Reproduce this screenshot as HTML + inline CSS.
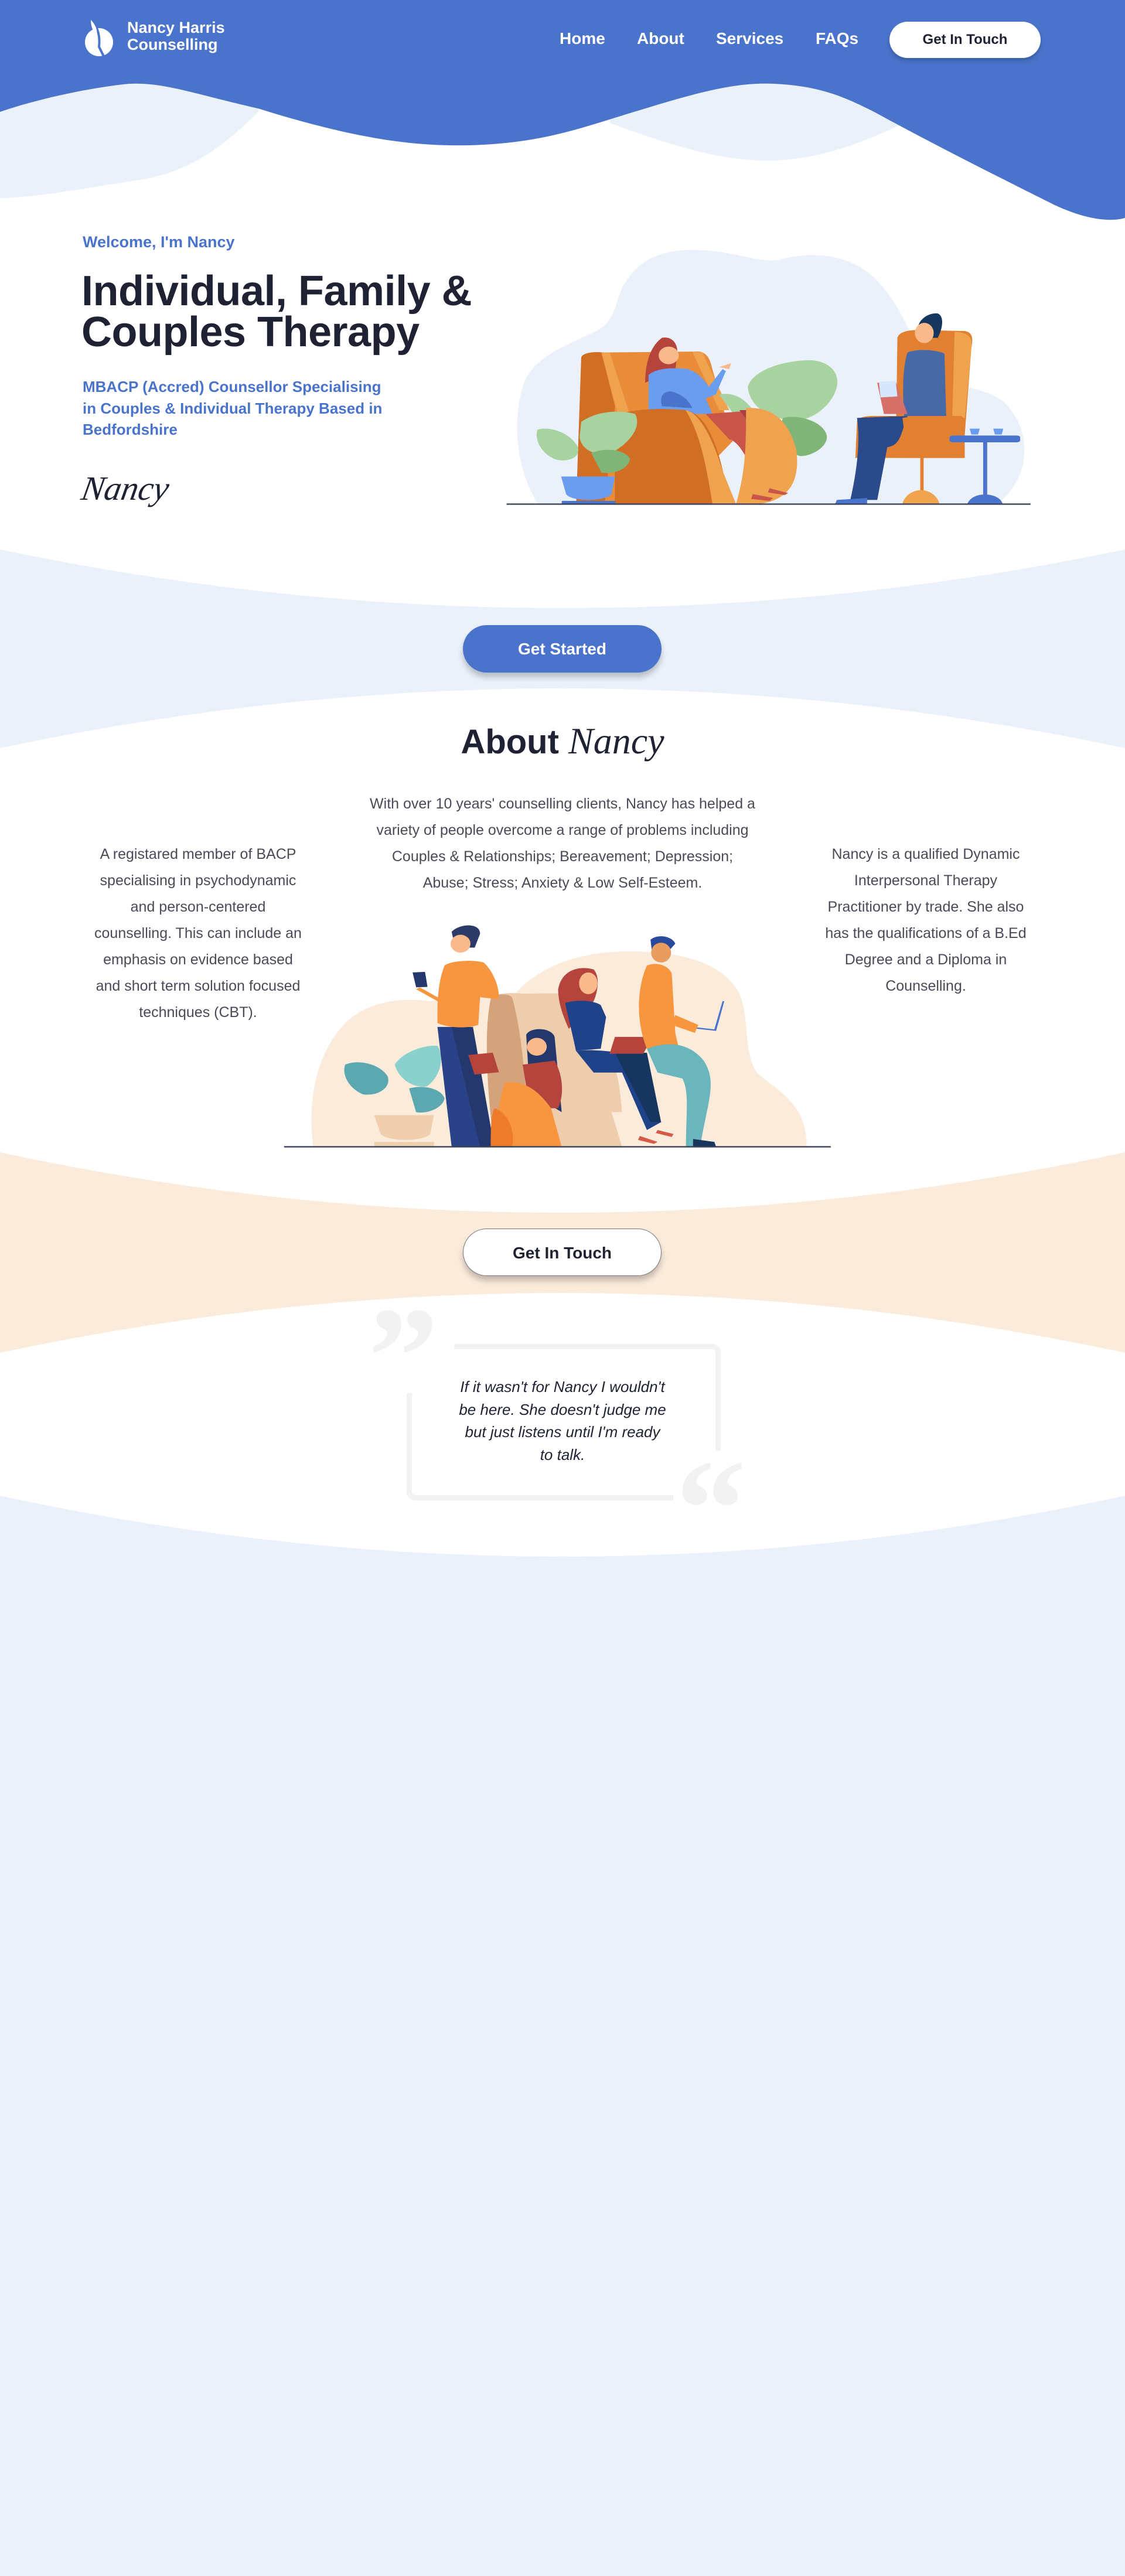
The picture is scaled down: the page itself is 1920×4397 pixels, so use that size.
<!DOCTYPE html>
<html><head><meta charset="utf-8"><style>
*{margin:0;padding:0;box-sizing:border-box}
body{width:1920px;height:4397px;position:relative;background:#fff;font-family:"Liberation Sans",sans-serif;overflow:hidden;color:#1f2233}
.a{position:absolute}
.nav{color:#fff;font-size:28px;font-weight:bold;top:50px}
.btn{position:absolute;left:790px;width:339px;height:81px;border-radius:41px;font-size:28px;font-weight:bold;text-align:center;line-height:81px;box-shadow:0 8px 10px rgba(0,0,0,.22)}
.p{font-size:25px;line-height:45px;color:#4a4a58;text-align:center}
.sig{font-family:"Liberation Serif",serif;font-style:italic;font-weight:normal}
</style></head><body>
<svg class="a" style="left:0;top:0" width="1920" height="4397" viewBox="0 0 1920 4397">
<path d="M0 338 C60 338 150 320 245 306 C330 290 380 250 441 191 L441 100 L0 100Z" fill="#eaf1fa"/>
<path d="M1041 210 C1150 250 1230 274 1310 274 C1400 274 1480 240 1543 210 L1543 100 L1041 100Z" fill="#eaf1fa"/>
<path d="M0 191 C60 170 150 150 220 143 C280 140 330 160 440 185 C600 235 700 250 800 248 C930 245 1000 215 1102 185 C1200 155 1260 140 1322 143 C1400 147 1440 165 1490 190 C1600 250 1700 300 1800 350 C1860 378 1900 378 1920 372 L1920 0 L0 0Z" fill="#4a74cc"/>
<path d="M0 938 Q960 1138 1920 938 L1920 1277 Q960 1073 0 1277Z" fill="#eaf1fa"/>
<path d="M0 1967 Q960 2173 1920 1967 L1920 2309 Q960 2105 0 2309Z" fill="#fbebdb"/>
<path d="M0 2553 Q960 2761 1920 2553 L1920 4397 L0 4397Z" fill="#eaf1fa"/>
</svg>

<!-- logo -->
<svg class="a" style="left:143px;top:32px" width="54" height="70" viewBox="0 0 54 70">
<circle cx="26" cy="40" r="24" fill="#fff"/>
<path d="M14 4 C24 14 28 30 26 48 L36 68" stroke="#4a74cc" stroke-width="4" fill="none"/>
<path d="M12 2 C20 10 24 20 22 30 C16 22 12 14 12 2Z" fill="#fff"/>
</svg>
<div class="a" style="left:217px;top:33px;color:#fff;font-size:27px;font-weight:bold;line-height:29px">Nancy Harris<br>Counselling</div>
<div class="a nav" style="left:955px">Home</div>
<div class="a nav" style="left:1087px">About</div>
<div class="a nav" style="left:1222px">Services</div>
<div class="a nav" style="left:1392px">FAQs</div>
<div class="a" style="left:1518px;top:37px;width:258px;height:62px;border-radius:31px;background:#fff;text-align:center;line-height:62px;font-size:24px;font-weight:bold;box-shadow:0 5px 8px rgba(0,0,0,.2)">Get In Touch</div>

<!-- hero text -->
<div class="a" style="left:141px;top:398px;font-size:27px;font-weight:bold;color:#4a74cc">Welcome, I'm Nancy</div>
<div class="a" style="left:139px;top:462px;font-size:72px;font-weight:bold;line-height:70px;letter-spacing:-0.5px">Individual, Family &amp;<br>Couples Therapy</div>
<div class="a" style="left:141px;top:642px;font-size:26px;font-weight:bold;line-height:36.5px;color:#4a74cc">MBACP (Accred) Counsellor Specialising<br>in Couples &amp; Individual Therapy Based in<br>Bedfordshire</div>
<div class="a sig" style="left:140px;top:800px;font-size:58px;transform:skewX(-10deg)">Nancy</div>

<!-- hero illustration -->
<svg class="a" style="left:860px;top:420px" width="900" height="450" viewBox="0 0 1568 1350" preserveAspectRatio="none">
<path d="M100 1320 C40 1150 20 900 60 700 C90 560 200 500 280 430 C330 380 330 300 350 220 C390 80 460 20 560 20 C680 20 760 90 820 70 C900 30 1020 30 1100 160 C1160 260 1190 380 1220 480 L1260 730 C1330 700 1420 720 1480 790 C1560 900 1580 1150 1480 1300 L1460 1320Z" fill="#eaf1fa"/>
<path d="M215 1320 L230 570 C235 545 270 540 300 545 L580 540 C600 545 610 570 615 600 L680 1000 L500 1320Z" fill="#e88c3a"/>
<path d="M215 1320 L230 570 C235 545 270 540 290 545 L330 820 L300 1320Z" fill="#d06e24"/>
<path d="M290 545 L315 548 L400 1000 L360 1000Z" fill="#f0a34f"/>
<path d="M560 540 L590 545 L670 840 L640 840Z" fill="#f0a34f"/>
<path d="M640 760 C700 740 740 820 760 900 L700 900Z" fill="#a8d29f"/>
<path d="M725 720 C740 640 820 590 900 585 C960 580 1000 640 990 720 C980 800 930 880 880 890 C800 900 730 830 725 720Z" fill="#a8d29f"/>
<path d="M830 880 C880 860 950 900 960 970 C965 1030 910 1080 880 1075 C830 1050 810 960 830 880Z" fill="#80b578"/>
<path d="M470 470 C500 460 520 500 515 560 L510 630 L420 700 C420 620 430 520 470 470Z" fill="#b5443d"/>
<ellipse cx="490" cy="560" rx="30" ry="45" fill="#f9b98b"/>
<path d="M430 660 C450 630 490 620 540 628 C580 640 600 700 610 720 L650 630 L660 640 L630 760 L600 780 L620 860 L430 860Z" fill="#6a9ded"/>
<path d="M640 620 L675 600 L670 630Z" fill="#f9b98b"/>
<path d="M470 820 C460 760 480 740 500 745 C530 760 550 790 560 830Z" fill="#4a74cc"/>
<path d="M330 870 C380 830 480 830 540 840 C600 860 640 1000 670 1320 L330 1320Z" fill="#d06e24"/>
<path d="M540 840 C580 850 620 980 650 1150 L690 1320 L620 1320 C600 1100 580 950 540 840Z" fill="#f0a34f"/>
<path d="M600 860 L760 840 C800 900 820 1100 830 1260 L800 1260 L760 1240 C730 1100 700 1000 670 990Z" fill="#c85547"/>
<path d="M700 840 L770 840 C820 920 830 1100 830 1250 L800 1250 C790 1100 760 960 700 840Z" fill="#a84040"/>
<path d="M720 830 C800 820 850 900 870 1050 C880 1200 850 1300 760 1320 L690 1320 C720 1150 720 1000 720 830Z" fill="#f0a34f"/>
<path d="M740 1270 L800 1290 L790 1305 L735 1295Z M790 1240 L845 1265 L835 1275 L785 1262Z" fill="#c85547"/>
<path d="M100 940 C140 920 200 960 220 1030 C230 1090 180 1110 150 1090 C110 1060 90 990 100 940Z" fill="#a8d29f"/>
<path d="M230 900 C280 840 350 840 390 860 C410 920 380 1000 320 1060 C270 1080 230 1040 225 980Z" fill="#a8d29f"/>
<path d="M260 1060 C300 1030 360 1040 375 1090 C370 1140 330 1170 290 1160Z" fill="#80b578"/>
<path d="M170 1180 L330 1180 L320 1270 C300 1310 200 1310 185 1270Z" fill="#6a9ded"/>
<rect x="172" y="1305" width="160" height="17" fill="#4a74cc"/>
<path d="M1165 1085 L1170 470 C1175 440 1200 430 1230 430 L1370 435 C1395 440 1395 480 1390 520 L1365 1085Z" fill="#e08030"/>
<path d="M1340 440 C1380 440 1395 470 1390 520 L1360 1085 L1330 1085Z" fill="#f0a34f"/>
<path d="M1230 430 C1230 380 1260 340 1290 345 C1310 360 1305 420 1290 470 L1240 470Z" fill="#17365f"/>
<ellipse cx="1250" cy="445" rx="28" ry="52" fill="#f9b98b"/>
<path d="M1200 545 C1230 525 1280 530 1310 550 L1315 870 L1190 870 C1185 760 1185 620 1200 545Z" fill="#4769a5"/>
<path d="M1110 700 L1165 695 L1200 860 L1130 860Z" fill="#d8706a"/>
<path d="M1115 695 L1165 690 L1170 770 L1120 775Z" fill="#d6e7fb"/>
<path d="M1050 900 C1050 880 1070 870 1100 870 L1360 870 C1370 880 1370 900 1370 1085 L1045 1085Z" fill="#e08030"/>
<path d="M1050 880 L1200 870 C1180 960 1180 1020 1140 1030 L1110 1300 L1030 1300 C1050 1150 1060 1000 1050 880Z" fill="#2a4a8c"/>
<path d="M1185 880 C1210 870 1360 870 1370 880 L1370 1085 L1200 1085Z" fill="#e08030"/>
<path d="M990 1300 L1080 1290 L1080 1320 L985 1320Z" fill="#4a74cc"/>
<rect x="1238" y="1085" width="10" height="170" fill="#e08030"/>
<path d="M1185 1320 C1190 1280 1215 1250 1240 1250 C1265 1250 1290 1280 1295 1320Z" fill="#f0a34f"/>
<rect x="1325" y="970" width="210" height="35" rx="10" fill="#4a74cc"/>
<rect x="1425" y="1000" width="12" height="280" fill="#4a74cc"/>
<path d="M1378 1320 C1385 1290 1405 1272 1430 1272 C1455 1272 1478 1290 1483 1320Z" fill="#4a74cc"/>
<path d="M1385 935 L1415 935 L1410 965 L1390 965Z M1455 935 L1485 935 L1480 965 L1460 965Z" fill="#6a9ded"/>
<rect x="8" y="1318" width="1558" height="7" fill="#3a4058"/>
</svg>

<div class="btn" style="top:1067px;background:#4a74cc;color:#fff">Get Started</div>

<div class="a" style="left:0;width:1920px;top:1228px;text-align:center;font-size:58px;font-weight:bold">About <span class="sig" style="font-size:64px">Nancy</span></div>
<div class="a p" style="left:576px;width:768px;top:1350px">With over 10 years' counselling clients, Nancy has helped a<br>variety of people overcome a range of problems including<br>Couples &amp; Relationships; Bereavement; Depression;<br>Abuse; Stress; Anxiety &amp; Low Self-Esteem.</div>
<div class="a p" style="left:128px;width:420px;top:1436px">A registared member of BACP<br>specialising in psychodynamic<br>and person-centered<br>counselling. This can include an<br>emphasis on evidence based<br>and short term solution focused<br>techniques (CBT).</div>
<div class="a p" style="left:1370px;width:420px;top:1436px">Nancy is a qualified Dynamic<br>Interpersonal Therapy<br>Practitioner by trade. She also<br>has the qualifications of a B.Ed<br>Degree and a Diploma in<br>Counselling.</div>

<!-- about illustration -->
<svg class="a" style="left:480px;top:1560px" width="950" height="400" viewBox="0 0 1568 1182" preserveAspectRatio="none">
<path d="M90 1175 C70 900 110 650 200 520 C260 440 340 420 420 440 L660 400 C720 280 820 200 950 190 C1100 180 1240 230 1290 400 C1320 520 1300 700 1340 800 C1400 900 1480 950 1480 1175Z" fill="#fbebdb"/>
<path d="M180 760 C220 730 280 760 300 820 C310 880 270 920 230 910 C190 880 170 810 180 760Z" fill="#5ba8b0"/>
<path d="M320 760 C340 700 400 660 440 665 C460 720 450 820 410 870 C370 880 330 830 320 760Z" fill="#8ad1cd"/>
<path d="M360 880 C400 860 450 880 460 930 C455 980 410 1010 380 1000Z" fill="#5ba8b0"/>
<path d="M262 1015 L430 1015 L420 1110 C400 1150 300 1150 280 1110Z" fill="#efcfae"/>
<rect x="262" y="1150" width="168" height="25" fill="#efcfae"/>
<path d="M590 430 C600 400 640 395 680 402 L810 400 C840 420 850 500 880 700 L960 1175 L600 1175 C580 900 570 600 590 430Z" fill="#edcdac"/>
<path d="M590 430 C600 400 640 400 650 420 C680 600 690 900 700 1175 L600 1175 C580 900 570 600 590 430Z" fill="#d4a27b"/>
<path d="M440 570 L520 570 L560 1175 L480 1175Z" fill="#2a4288"/>
<path d="M480 570 L540 570 L600 1175 L560 1175Z" fill="#24386e"/>
<path d="M460 260 C480 235 540 230 570 245 C600 290 620 400 610 430 L560 420 L555 560 C520 580 470 575 440 550 C440 450 440 350 460 260Z" fill="#f7963f"/>
<path d="M370 295 L405 292 L412 368 L380 370Z" fill="#24386e"/>
<path d="M390 370 L470 450 L460 460 L380 380Z" fill="#f7963f"/>
<path d="M480 90 C500 50 560 40 560 100 L545 170 L490 170Z" fill="#2c3a68"/>
<ellipse cx="505" cy="150" rx="28" ry="45" fill="#f9b98b"/>
<path d="M690 610 C700 570 760 570 770 620 L790 1000 L700 900Z" fill="#24386e"/>
<ellipse cx="720" cy="670" rx="28" ry="45" fill="#f9b98b"/>
<path d="M680 760 L770 740 C790 800 800 900 780 980 L700 980Z" fill="#b5443d"/>
<path d="M630 850 C680 840 720 880 760 980 L790 1175 L590 1175 L600 1100C610 1000 620 900 630 850Z" fill="#f7963f"/>
<path d="M600 980 C640 1000 660 1100 650 1175 L590 1175 C590 1100 590 1020 600 980Z" fill="#ed7b2b"/>
<rect x="535" y="705" width="70" height="100" fill="#b5443d" transform="rotate(-10 570 755)"/>
<path d="M790 700 C830 690 880 690 920 710 C940 760 950 800 960 1000 L880 1000 Z" fill="#edcdac"/>
<path d="M780 380 C790 280 840 260 880 280 C900 320 890 400 880 440 L810 580 C790 500 780 440 780 380Z" fill="#b5443d"/>
<ellipse cx="865" cy="350" rx="26" ry="55" fill="#f9b98b"/>
<path d="M800 450 C830 430 880 435 900 460 L915 520 L900 680 L830 690 C820 600 805 500 800 450Z" fill="#1e4389"/>
<path d="M830 690 C900 680 1000 700 1030 760 L1070 1050 L1030 1090 L960 800 L880 800Z" fill="#1e4389"/>
<path d="M940 700 L1030 700 L1070 1050 L1040 1050Z" fill="#17365f"/>
<path d="M940 620 L1045 620 L1020 705 L925 705Z" fill="#b5443d"/>
<path d="M1010 1120 L1060 1150 L1050 1160 L1005 1140Z M1060 1090 L1105 1110 L1100 1125 L1055 1105Z" fill="#d55a48"/>
<path d="M1030 260 C1060 240 1090 260 1100 300 L1110 600 L1120 680 L1030 680 C1000 550 1000 380 1030 260Z" fill="#f7963f"/>
<path d="M1030 680 C1090 640 1150 650 1190 740 C1230 850 1200 950 1180 1175 L1140 1175 C1140 1000 1150 900 1130 830 L1060 800Z" fill="#6bb5bd"/>
<path d="M1040 130 C1060 100 1100 110 1110 150 L1090 190 L1045 200Z" fill="#2a4a9c"/>
<ellipse cx="1070" cy="195" rx="28" ry="50" fill="#e89c5f"/>
<path d="M1150 575 L1225 590 L1248 440 L1243 440 L1220 582 L1150 568Z" fill="#4a74cc"/>
<path d="M1110 510 L1175 560 L1165 600 L1100 560Z" fill="#f7963f"/>
<path d="M1160 1135 L1220 1150 L1225 1175 L1160 1175Z" fill="#17365f"/>
<rect x="8" y="1171" width="1540" height="7" fill="#3a4058"/>
</svg>

<div class="btn" style="top:2097px;background:#fff;color:#1f2233;border:1.5px solid #777">Get In Touch</div>

<!-- quote -->
<div class="a" style="left:775px;top:2294px;width:455px;border-top:9px solid #f2f2f2;border-right:9px solid #f2f2f2;border-top-right-radius:14px;height:182px"></div>
<div class="a" style="left:694px;top:2378px;width:455px;height:183px;border-left:9px solid #f2f2f2;border-bottom:9px solid #f2f2f2;border-bottom-left-radius:14px"></div>
<div class="a" style="left:628px;top:2195px;font-family:'Liberation Serif',serif;font-size:240px;line-height:240px;color:#f2f2f2;font-weight:bold">&#8221;</div>
<div class="a" style="left:1153px;top:2455px;font-family:'Liberation Serif',serif;font-size:240px;line-height:240px;color:#f2f2f2;font-weight:bold">&#8220;</div>
<div class="a" style="left:740px;width:440px;top:2348px;font-size:26px;line-height:38.5px;font-style:italic;text-align:center;color:#1f2233">If it wasn't for Nancy I wouldn't<br>be here. She doesn't judge me<br>but just listens until I'm ready<br>to talk.</div>
</body></html>
